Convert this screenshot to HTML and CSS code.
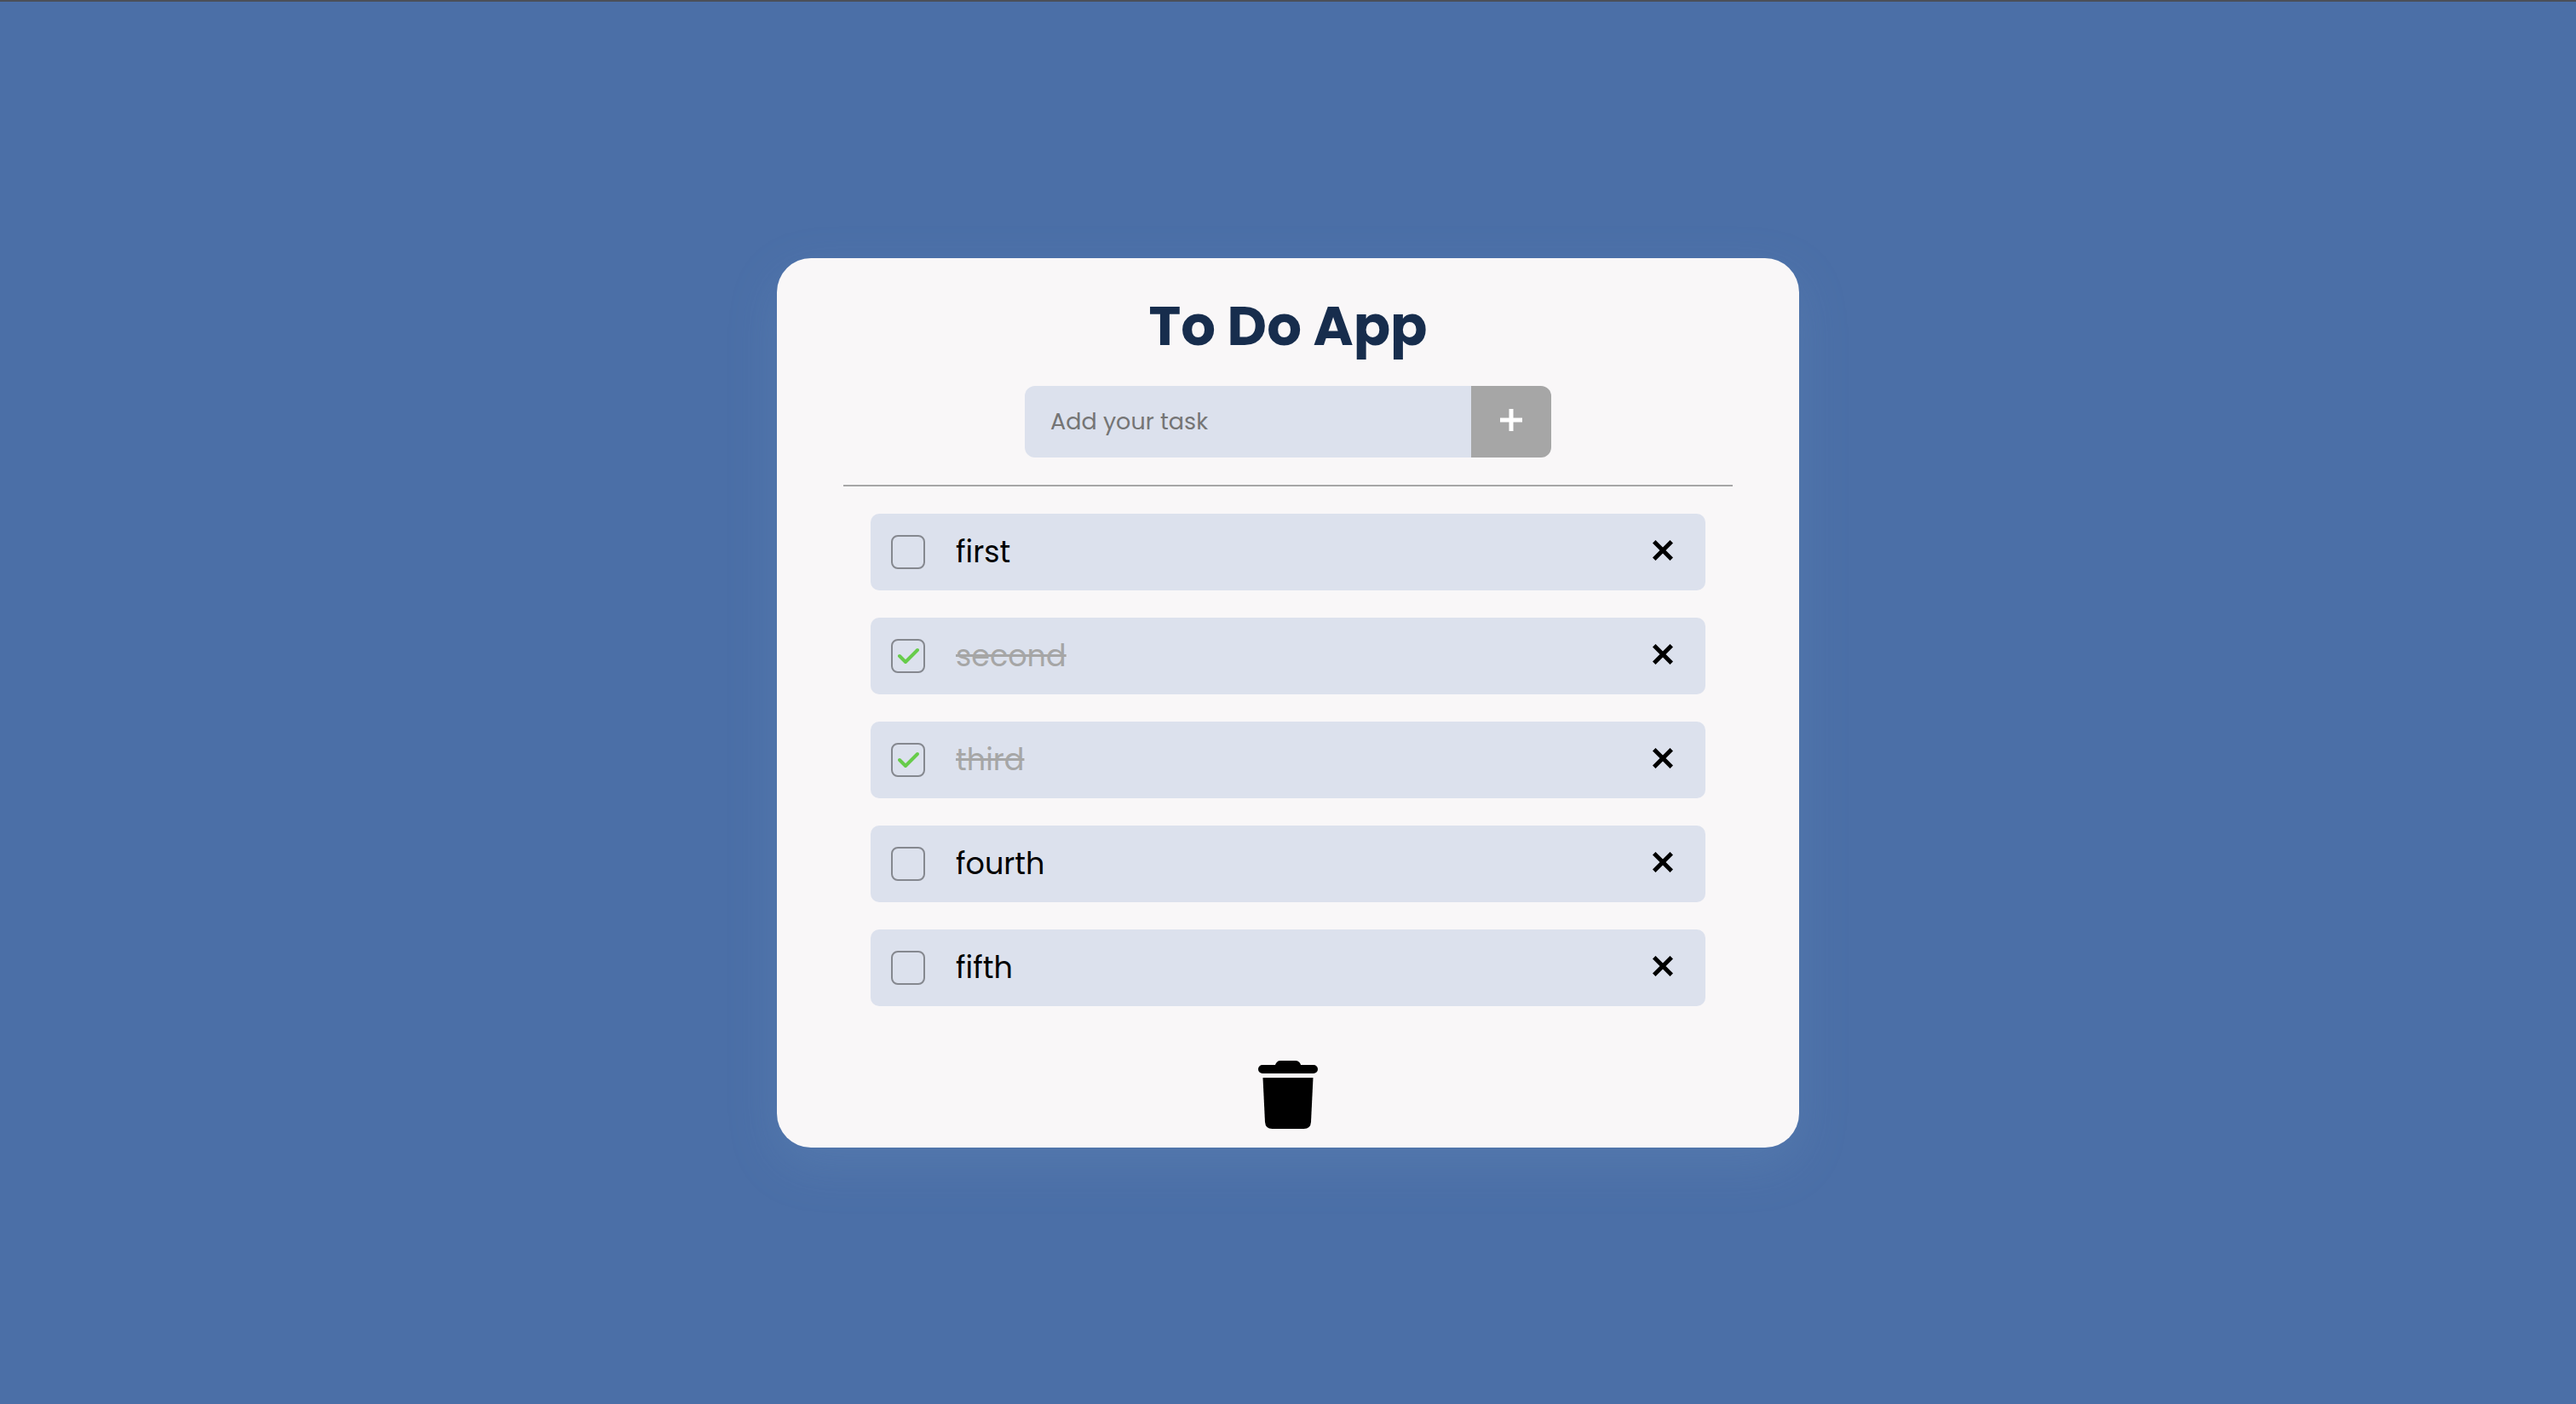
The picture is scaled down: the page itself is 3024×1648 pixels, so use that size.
FILE: index.html
```html
<!DOCTYPE html>
<html lang="en">
<head>
<meta charset="utf-8">
<meta name="viewport" content="width=device-width, initial-scale=1">
<title>To Do App</title>
<link rel="stylesheet" href="styles.css">
</head>
<body>
<svg class="sprite" aria-hidden="true">
  <symbol id="icon-close" viewBox="0 0 24 24"><path d="M3.500 3.500L20.500 20.500M20.500 3.500L3.500 20.500" fill="none" stroke="currentColor" stroke-width="5" stroke-linecap="square"/></symbol>
</svg>
<main class="card">
  <h1 class="title">To Do App</h1>
  <form class="add-form">
    <input class="add-input" type="text" placeholder="Add your task" aria-label="Add your task">
    <button class="add-button" type="button" aria-label="Add task">
      <svg class="icon-plus" viewBox="0 0 26 26" aria-hidden="true"><path d="M13 0V26M0 13H26" fill="none" stroke="currentColor" stroke-width="5"/></svg>
    </button>
  </form>
  <hr class="divider">
  <ul class="tasks">
    <li class="task">
      <input class="task-check" type="checkbox" id="task-1">
      <label class="task-name" for="task-1">first</label>
      <button class="task-remove" type="button" aria-label="Remove first"><svg class="icon-close" aria-hidden="true"><use href="#icon-close"/></svg></button>
    </li>
    <li class="task">
      <input class="task-check" type="checkbox" id="task-2" checked>
      <label class="task-name" for="task-2">second</label>
      <button class="task-remove" type="button" aria-label="Remove second"><svg class="icon-close" aria-hidden="true"><use href="#icon-close"/></svg></button>
    </li>
    <li class="task">
      <input class="task-check" type="checkbox" id="task-3" checked>
      <label class="task-name" for="task-3">third</label>
      <button class="task-remove" type="button" aria-label="Remove third"><svg class="icon-close" aria-hidden="true"><use href="#icon-close"/></svg></button>
    </li>
    <li class="task">
      <input class="task-check" type="checkbox" id="task-4">
      <label class="task-name" for="task-4">fourth</label>
      <button class="task-remove" type="button" aria-label="Remove fourth"><svg class="icon-close" aria-hidden="true"><use href="#icon-close"/></svg></button>
    </li>
    <li class="task">
      <input class="task-check" type="checkbox" id="task-5">
      <label class="task-name" for="task-5">fifth</label>
      <button class="task-remove" type="button" aria-label="Remove fifth"><svg class="icon-close" aria-hidden="true"><use href="#icon-close"/></svg></button>
    </li>
  </ul>
  <button class="clear-button" type="button" aria-label="Delete all tasks">
    <svg class="icon-trash" viewBox="0 0 70 80" fill="currentColor" aria-hidden="true">
      <path d="M5 5H20C21 2 23 0 26 0H44C47 0 49 2 50 5H65A5 5 0 0 1 65 15H5A5 5 0 0 1 5 5Z"/>
      <path d="M5.5 20H64.5L62 72Q61.500 80 53.500 80H16.500Q8.500 80 8 72Z"/>
    </svg>
  </button>
</main>
</body>
</html>
```

FILE: styles.css
```css
* {
  box-sizing: border-box;
}

body {
  margin: 0;
  min-height: 100vh;
  display: flex;
  align-items: center;
  justify-content: center;
  border-top: 2px solid #4b4f58;
  background: #4b6fa7;
  font-family: Poppins, Inter, sans-serif;
}

button {
  padding: 0;
  border: 0;
  background: none;
  color: inherit;
  cursor: pointer;
}

svg {
  display: block;
}

.sprite {
  position: absolute;
  width: 0;
  height: 0;
}

.card {
  width: 90%;
  max-width: 1200px;
  padding: 32px 78px 22px;
  display: flex;
  flex-direction: column;
  align-items: center;
  border-radius: 40px;
  background: #f9f7f8;
  box-shadow: 0 20px 60px rgba(120, 160, 200, 0.2);
}

.title {
  margin: 0 0 22px;
  color: #172d4d;
  font-size: 64px;
  line-height: 96px;
  font-weight: 700;
}

.add-form {
  width: 100%;
  max-width: 618px;
  display: flex;
}

.add-input {
  flex: 1;
  min-width: 0;
  height: 84px;
  padding: 0 30px;
  border: 0;
  border-radius: 12px 0 0 12px;
  background: #dce1ed;
  font-family: inherit;
  font-size: 27px;
}

.add-input::placeholder {
  color: #757575;
}

.add-button {
  width: 94px;
  display: flex;
  align-items: center;
  justify-content: center;
  padding-bottom: 4px;
  border-radius: 0 12px 12px 0;
  background: #a6a6a6;
  color: #fff;
}

.icon-plus {
  width: 26px;
  height: 26px;
}

.divider {
  width: 100%;
  margin: 32px 0;
  border: 0;
  border-top: 2px solid #a6a6a6;
}

.tasks {
  width: 100%;
  max-width: 980px;
  margin: 0;
  padding: 0;
  display: grid;
  gap: 32px;
  list-style: none;
}

.task {
  height: 90px;
  padding: 0 38px 0 24px;
  display: flex;
  align-items: center;
  border-radius: 10px;
  background: #dce1ed;
}

.task-check {
  appearance: none;
  width: 40px;
  height: 40px;
  margin: 0 36px 0 0;
  border: 2px solid #85888f;
  border-radius: 8px;
}

.task-check:checked {
  background: url("data:image/svg+xml,%3Csvg xmlns='http://www.w3.org/2000/svg' viewBox='0 0 36 36'%3E%3Cpath d='M8 18L15 25L29 11' fill='none' stroke='%2367cc4b' stroke-width='4' stroke-linecap='round' stroke-linejoin='round'/%3E%3C/svg%3E") center / 100% no-repeat;
}

.task-name {
  flex: 1;
  font-size: 35px;
  line-height: 54px;
}

.task-check:checked + .task-name {
  color: #a6a6a6;
  text-decoration: line-through 3px;
}

.task-remove {
  padding-bottom: 4px;
}

.icon-close {
  width: 24px;
  height: 24px;
}

.clear-button {
  margin-top: 64px;
}

.icon-trash {
  width: 70px;
  height: 80px;
}
```
